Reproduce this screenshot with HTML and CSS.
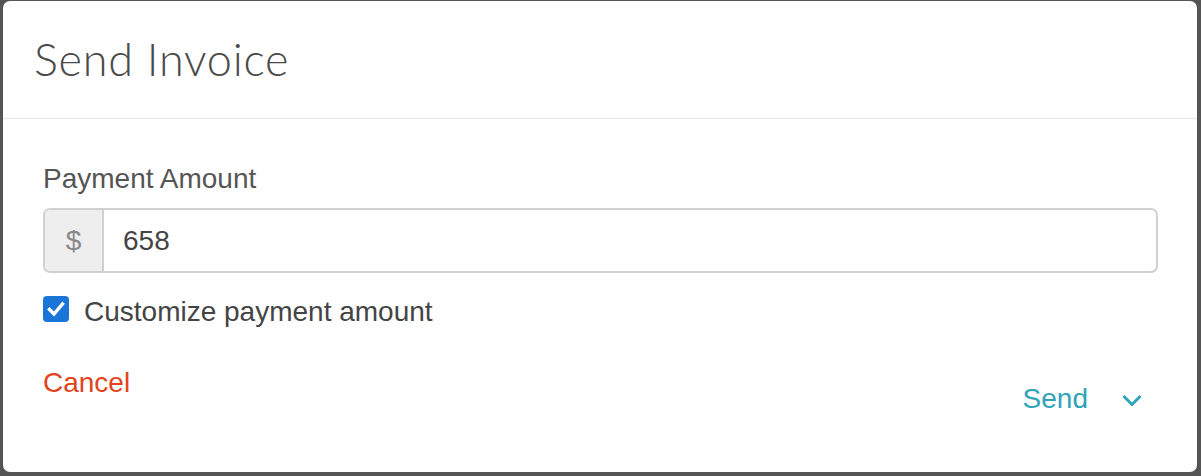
FILE: index.html
```html
<!DOCTYPE html>
<html>
<head>
<meta charset="utf-8">
<link rel="stylesheet" href="styles.css">
</head>
<body>
<div class="modal">
  <div class="modal-header">
    <h1 class="title">Send Invoice</h1>
  </div>
  <div class="modal-body">
    <label class="label">Payment Amount</label>
    <div class="input-group">
      <span class="addon">$</span>
      <span class="input">658</span>
    </div>
    <div class="check-row">
      <span class="checkbox">
        <svg viewBox="0 0 26 26" width="26" height="26"><path d="M6.5 13.5 L11 18 L19.5 8" fill="none" stroke="#fff" stroke-width="3.4" stroke-linecap="square"/></svg>
      </span>
      <span class="check-label">Customize payment amount</span>
    </div>
    <div class="footer">
      <a class="cancel">Cancel</a>
      <a class="send">Send
        <svg class="chev" viewBox="0 0 20 13" width="20" height="13"><path d="M1.5 2 L10 10.5 L18.5 2" fill="none" stroke="#2fa3b8" stroke-width="3"/></svg>
      </a>
    </div>
  </div>
</div>
</body>
</html>
```
FILE: styles.css
```css
html, body {
  margin: 0;
  height: 100%;
}
body {
  background: #555555;
  padding: 1px 4px 4px 3px;
  box-sizing: border-box;
  font-family: "Liberation Sans", Arial, sans-serif;
}
.modal {
  background: #fff;
  border-radius: 7px;
  height: 100%;
  box-sizing: border-box;
}
.modal-header {
  height: 117px;
  border-bottom: 1px solid #e5e5e5;
  padding-left: 31px;
  display: flex;
  align-items: center;
}
.title {
  margin: 0;
  font-family: Lato, sans-serif;
  font-weight: 300;
  font-size: 45px;
  color: #4a4a4a;
  letter-spacing: 0.75px;
  padding-bottom: 1px;
}
.modal-body {
  padding: 44px 39px 0 40px;
}
.label {
  display: block;
  font-size: 28px;
  color: #555;
  line-height: 32px;
}
.input-group {
  margin-top: 13px;
  display: flex;
  height: 65px;
  border: 2px solid #d0d0d0;
  border-radius: 7px;
  box-sizing: border-box;
  overflow: hidden;
}
.addon {
  width: 57px;
  background: #eeeeee;
  border-right: 2px solid #d0d0d0;
  display: flex;
  align-items: center;
  justify-content: center;
  font-size: 28px;
  color: #888;
}
.input {
  flex: 1;
  display: flex;
  align-items: center;
  padding-left: 19px;
  font-size: 28px;
  color: #444;
}
.check-row {
  margin-top: 21px;
  display: flex;
  align-items: center;
  height: 30px;
}
.checkbox {
  width: 26px;
  height: 26px;
  background: #1a75d8;
  border-radius: 4px;
  display: block;
}
.checkbox svg { display: block; }
.check-label {
  margin-left: 15px;
  padding-top: 6px;
  font-size: 28px;
  color: #444;
}
.footer {
  margin-top: 43px;
  display: flex;
  justify-content: space-between;
  align-items: flex-start;
}
.cancel {
  font-size: 28px;
  color: #e2431e;
  line-height: 32px;
}
.send {
  margin-top: 16px;
  font-size: 28px;
  color: #2fa3b8;
  line-height: 32px;
  display: flex;
  align-items: center;
  margin-right: 16px;
}
.chev {
  margin-left: 34px;
  margin-top: 2px;
}
```
